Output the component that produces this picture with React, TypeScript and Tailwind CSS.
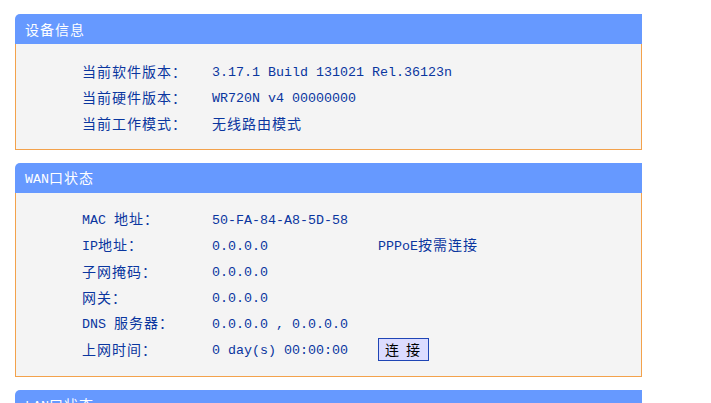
import React from 'react'

// ASCII runs go in a narrow mono face, CJK runs get a little tracking
function Txt({ s }: { s: string }) {
  const parts = s.split(/([\x20-\x7e]+)/).filter((p) => p !== '')
  return (
    <span>
      {parts.map((p, i) =>
        /^[\x20-\x7e]+$/.test(p) ? (
          <span
            key={i}
            className='whitespace-pre text-[13.33px] [font-family:"Liberation_Mono","DejaVu_Sans_Mono",monospace]'
          >
            {p}
          </span>
        ) : (
          <span
            key={i}
            className='text-[14px] tracking-[1px] [font-family:"Noto_Sans_CJK_SC",sans-serif]'
          >
            {p}
          </span>
        )
      )}
    </span>
  )
}

type Row = { label: string; value: string; extra?: React.ReactNode }

function Panel({ title, rows, pt, pb }: { title: string; rows: Row[]; pt: string; pb: string }) {
  return (
    <div className="w-[627px]">
      <div className="h-[30px] bg-[#6699ff] rounded-tl-[5px] pl-[10px] flex items-center text-white leading-none">
        <Txt s={title} />
      </div>
      <div className={`bg-[#f4f4f4] border-x border-b border-[#f3a24c] ${pt} ${pb}`}>
        {rows.map((r, i) => (
          <div key={i} className="h-[26px] flex items-center text-[#0a369f] leading-none">
            <div className="w-[196px] pl-[66px] shrink-0">
              <Txt s={r.label} />
            </div>
            <div className="w-[166px] shrink-0">
              <Txt s={r.value} />
            </div>
            <div className="flex items-center">{r.extra}</div>
          </div>
        ))}
      </div>
    </div>
  )
}

export default function App() {
  const device: Row[] = [
    { label: '当前软件版本：', value: '3.17.1 Build 131021 Rel.36123n' },
    { label: '当前硬件版本：', value: 'WR720N v4 00000000' },
    { label: '当前工作模式：', value: '无线路由模式' },
  ]
  const wan: Row[] = [
    { label: 'MAC 地址：', value: '50-FA-84-A8-5D-58' },
    { label: 'IP地址：', value: '0.0.0.0', extra: <Txt s="PPPoE按需连接" /> },
    { label: '子网掩码：', value: '0.0.0.0' },
    { label: '网关：', value: '0.0.0.0' },
    { label: 'DNS 服务器：', value: '0.0.0.0 , 0.0.0.0' },
    {
      label: '上网时间：',
      value: '0 day(s) 00:00:00',
      extra: (
        <button className='w-[51px] h-[23px] bg-[#dcdcff] border border-[#1f45b5] text-black text-[14px] leading-none [font-family:"Noto_Sans_CJK_SC",sans-serif] tracking-[2px] flex items-center justify-center'>
          连 接
        </button>
      ),
    },
  ]
  return (
    <div className="h-[403px] overflow-hidden bg-white pl-[15px] pt-[14px] flex flex-col gap-[13px]">
      <Panel title="设备信息" rows={device} pt="pt-[14px]" pb="pb-[13px]" />
      <Panel title="WAN口状态" rows={wan} pt="pt-[13px]" pb="pb-[14px]" />
      <Panel title="LAN口状态" rows={[]} pt="pt-[13px]" pb="pb-[14px]" />
    </div>
  )
}
